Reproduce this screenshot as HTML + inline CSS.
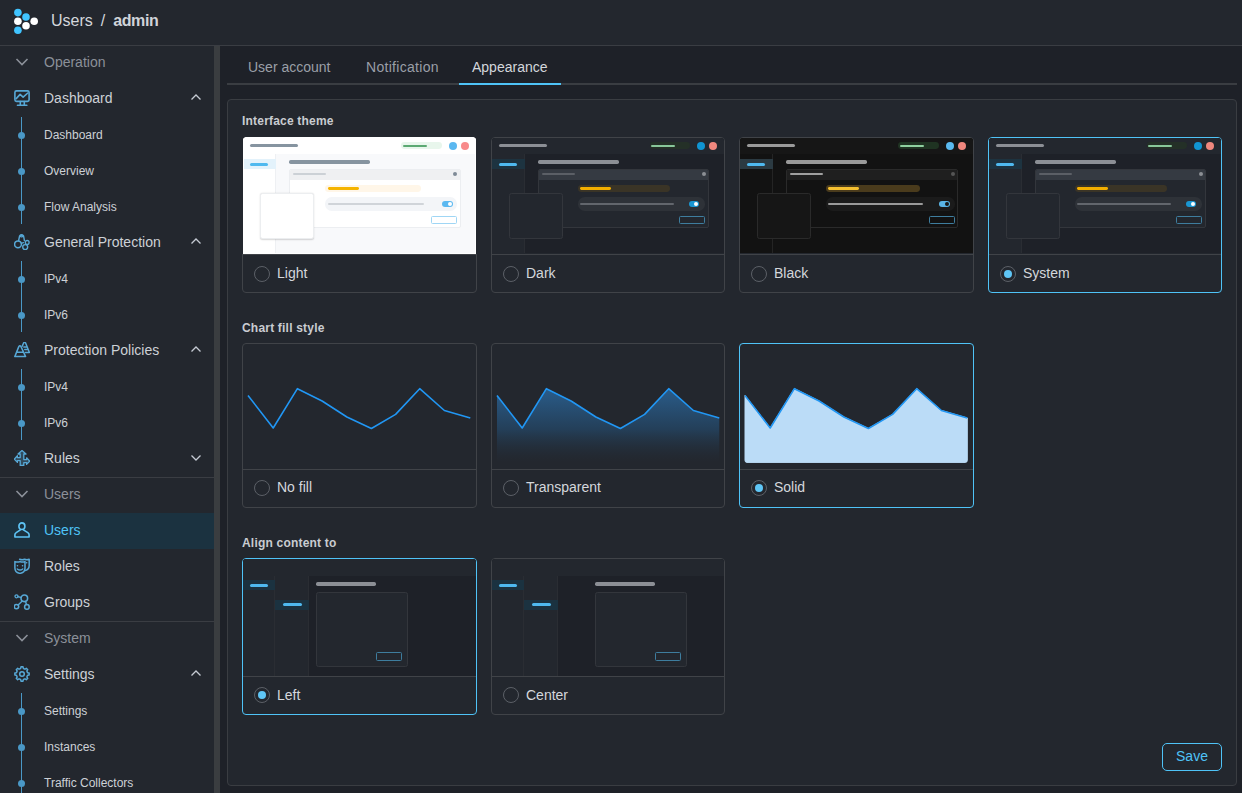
<!DOCTYPE html>
<html><head><meta charset="utf-8"><title>Appearance</title>
<style>
*{box-sizing:border-box;margin:0;padding:0}
html,body{width:1242px;height:793px;overflow:hidden;background:#1e2128;font-family:"Liberation Sans",sans-serif;color:#d4d7dc;position:relative}
.a{position:absolute}
.row{position:absolute;left:0;width:214px;height:36px;line-height:36px;font-size:14px;white-space:nowrap;color:#cdd1d6}
.row .t{position:absolute;left:44px;top:-1px}
.row.sub .t{top:0}
.sec{color:#8b9099}
.bt{border-top:1px solid #3a3d43}
.sub{font-size:12px}
.row svg{position:absolute}
.tab{position:absolute;top:52px;font-size:14px;line-height:30px;color:#9a9fa7;white-space:nowrap}
.lbl{position:absolute;font-size:12px;font-weight:bold;color:#c9ccd1;white-space:nowrap;line-height:16px;letter-spacing:0.2px}
.card{position:absolute;width:235px;border:1px solid #404348;border-radius:4px;background:#23272e;overflow:hidden}
.card.sel{border-color:#4fc3f7}
.sep{position:absolute;left:0;right:0;height:1px;background:#404348}
.radio{position:absolute;width:16px;height:16px;border-radius:50%;border:1px solid #5c6067}
.radio.on::after{content:"";position:absolute;left:3px;top:3px;width:8px;height:8px;border-radius:50%;background:#5fc6f6}
.ctext{position:absolute;font-size:14px;color:#d4d7dc;white-space:nowrap;line-height:16px}
.pv{position:absolute;left:-1px;top:-1px;width:235px;overflow:hidden}
.r{position:absolute}
</style></head>
<body>

<div class="a" style="left:0;top:0;width:1242px;height:45px;background:#23272e"></div>
<div class="a" style="left:0;top:45px;width:1242px;height:1px;background:#3a3d43"></div>
<svg class="a" style="left:0;top:0" width="46" height="45">
<circle cx="17.9" cy="12.6" r="3.8" fill="#40c4ff"/><circle cx="26" cy="17" r="3.8" fill="#40c4ff"/>
<circle cx="17.9" cy="21.3" r="3.8" fill="#fff"/><circle cx="34.2" cy="21.3" r="3.8" fill="#fff"/>
<circle cx="26" cy="25.8" r="3.8" fill="#fff"/><circle cx="17.9" cy="30.2" r="3.8" fill="#40c4ff"/></svg>
<div class="a" style="left:51px;top:9px;font-size:16px;line-height:24px;color:#d4d7dc;white-space:nowrap">Users<span style="margin:0 8px 0 8px">/</span><span style="font-weight:bold;letter-spacing:-0.4px;color:#d0d4da">admin</span></div>
<div class="a" style="left:0;top:46px;width:214px;height:747px;background:#23272e"></div>
<div class="a" style="left:214px;top:46px;width:6px;height:747px;background:#3a3d40"></div>
<div class="row sec" style="top:45px"><svg style="left:15px;top:12px" width="14" height="10"><path d="M1.5 2 L7 7.5 L12.5 2" fill="none" stroke="#8b9099" stroke-width="1.6"/></svg><span class="t" style="top:-1px">Operation</span></div>
<div class="row" style="top:81px"><svg style="left:14px;top:9px" width="16" height="16" viewBox="0 0 16 16" fill="none" stroke="#57a8d6" stroke-width="1.6" stroke-linecap="round" stroke-linejoin="round"><rect x="0.9" y="0.9" width="14.2" height="10.5" rx="1.6"/><path d="M2.2 8.6 L6.1 4.4 L9.1 7.2 L13.8 3"/><path d="M6.3 11.6 V15 M10.3 11.6 V15 M3.5 15.3 H12.8"/></svg><span class="t">Dashboard</span><svg style="left:190px;top:12px" width="12" height="8"><path d="M1.5 6.5 L6 2 L10.5 6.5" fill="none" stroke="#c5cad3" stroke-width="1.3"/></svg></div>
<div class="row sub" style="top:117px">
<div class="r" style="left:20.6px;top:0;width:1.5px;height:36px;background:#4a98c6"></div>
<div class="r" style="left:17.9px;top:14.7px;width:7px;height:7px;border-radius:50%;background:#4a98c6"></div>
<span class="t">Dashboard</span></div>
<div class="row sub" style="top:153px">
<div class="r" style="left:20.6px;top:0;width:1.5px;height:36px;background:#4a98c6"></div>
<div class="r" style="left:17.9px;top:14.7px;width:7px;height:7px;border-radius:50%;background:#4a98c6"></div>
<span class="t">Overview</span></div>
<div class="row sub" style="top:189px">
<div class="r" style="left:20.6px;top:0;width:1.5px;height:35px;background:#4a98c6"></div>
<div class="r" style="left:17.9px;top:14.7px;width:7px;height:7px;border-radius:50%;background:#4a98c6"></div>
<span class="t">Flow Analysis</span></div>
<div class="row" style="top:225px"><svg style="left:14px;top:9px" width="16" height="16" viewBox="0 0 16 16" fill="none" stroke="#57a8d6" stroke-width="1.6" stroke-linecap="round" stroke-linejoin="round"><path d="M4.6 6.6 L5.6 2 Q7.5 -0.4 9.6 2 L10.4 6.6" stroke-width="1.4"/><ellipse cx="7.6" cy="2.2" rx="1.2" ry="0.7" stroke-width="1.2"/><circle cx="4" cy="10.3" r="3.4" stroke-width="1.5"/><circle cx="13.2" cy="8.4" r="1.9" stroke-width="1.3"/><circle cx="11.2" cy="13.1" r="2.5" stroke-width="1.4"/><path d="M7.4 9.4 L9.4 8.6" stroke-width="1.3"/></svg><span class="t">General Protection</span><svg style="left:190px;top:12px" width="12" height="8"><path d="M1.5 6.5 L6 2 L10.5 6.5" fill="none" stroke="#c5cad3" stroke-width="1.3"/></svg></div>
<div class="row sub" style="top:261px">
<div class="r" style="left:20.6px;top:0;width:1.5px;height:36px;background:#4a98c6"></div>
<div class="r" style="left:17.9px;top:14.7px;width:7px;height:7px;border-radius:50%;background:#4a98c6"></div>
<span class="t">IPv4</span></div>
<div class="row sub" style="top:297px">
<div class="r" style="left:20.6px;top:0;width:1.5px;height:35px;background:#4a98c6"></div>
<div class="r" style="left:17.9px;top:14.7px;width:7px;height:7px;border-radius:50%;background:#4a98c6"></div>
<span class="t">IPv6</span></div>
<div class="row" style="top:333px"><svg style="left:14px;top:9px" width="16" height="16" viewBox="0 0 16 16" fill="none" stroke="#57a8d6" stroke-width="1.6" stroke-linecap="round" stroke-linejoin="round"><path d="M0.8 14.6 H11.6 L7 4.6 Q5.9 2.8 4.8 4.6 Z M2.6 10.2 H9.4" stroke-width="1.5"/><path d="M8.2 4.3 L9.6 1 Q10.6 -0.6 11.6 1 L15.4 10.4 H11.4 M9.8 5 H13 M10.8 7.6 H14.2" stroke-width="1.5"/></svg><span class="t">Protection Policies</span><svg style="left:190px;top:12px" width="12" height="8"><path d="M1.5 6.5 L6 2 L10.5 6.5" fill="none" stroke="#c5cad3" stroke-width="1.3"/></svg></div>
<div class="row sub" style="top:369px">
<div class="r" style="left:20.6px;top:0;width:1.5px;height:36px;background:#4a98c6"></div>
<div class="r" style="left:17.9px;top:14.7px;width:7px;height:7px;border-radius:50%;background:#4a98c6"></div>
<span class="t">IPv4</span></div>
<div class="row sub" style="top:405px">
<div class="r" style="left:20.6px;top:0;width:1.5px;height:35px;background:#4a98c6"></div>
<div class="r" style="left:17.9px;top:14.7px;width:7px;height:7px;border-radius:50%;background:#4a98c6"></div>
<span class="t">IPv6</span></div>
<div class="row" style="top:441px"><svg style="left:14px;top:9px" width="16" height="16" viewBox="0 0 16 16" fill="none" stroke="#57a8d6" stroke-width="1.6" stroke-linecap="round" stroke-linejoin="round"><path d="M8 0.6 L12 4 H9.8 V9.6 H12.6 V7.8 L15.6 11.1 L12.6 14.4 V12.6 H9.8 V15.4 H6.2 V10.6 H3.4 V12.4 L0.4 9.1 L3.4 5.8 V7.6 H6.2 V4 H4 Z" stroke-width="1.3" fill="rgba(87,168,214,0.28)"/></svg><span class="t">Rules</span><svg style="left:190px;top:13px" width="12" height="8"><path d="M1.5 1.5 L6 6 L10.5 1.5" fill="none" stroke="#c5cad3" stroke-width="1.3"/></svg></div>
<div class="row sec bt" style="top:477px"><svg style="left:15px;top:11px" width="14" height="10"><path d="M1.5 2 L7 7.5 L12.5 2" fill="none" stroke="#8b9099" stroke-width="1.6"/></svg><span class="t" style="top:-2px">Users</span></div>
<div class="row" style="top:513px;background:#1b3240;color:#4fc3f7"><svg style="left:14px;top:9px" width="16" height="16" viewBox="0 0 16 16" fill="none" stroke="#5ec4f5" stroke-width="1.6" stroke-linecap="round" stroke-linejoin="round"><ellipse cx="7.9" cy="4.2" rx="3" ry="3.3"/><path d="M6.4 7.8 L2.2 10.6 Q0.9 11.4 0.9 12.8 V15 H15.1 V12.8 Q15.1 11.4 13.8 10.6 L9.4 7.8"/></svg><span class="t">Users</span></div>
<div class="row" style="top:549px"><svg style="left:14px;top:9px" width="16" height="16" viewBox="0 0 16 16" fill="none" stroke="#57a8d6" stroke-width="1.6" stroke-linecap="round" stroke-linejoin="round"><path d="M0.9 3.6 Q3.5 4.6 6 3.6 Q8.6 4.6 11 3.6 V10 Q11 14.6 6 15.4 Q0.9 14.6 0.9 10 Z" stroke-width="1.5"/><path d="M5.6 1.2 Q8.2 2.2 10.6 1.2 Q13 2.2 15.2 1.2 V7.4 Q15.2 11.4 11.2 12.6" stroke-width="1.5"/><path d="M3.3 11 Q6 13.2 8.7 11 M3.4 7.8 h.1 M8.5 7.8 h.1 M12.6 4.8 h.1" stroke-width="1.5"/></svg><span class="t">Roles</span></div>
<div class="row" style="top:585px"><svg style="left:14px;top:9px" width="16" height="16" viewBox="0 0 16 16" fill="none" stroke="#57a8d6" stroke-width="1.6" stroke-linecap="round" stroke-linejoin="round"><circle cx="2.5" cy="2.3" r="1.5" stroke-width="1.3"/><circle cx="10.3" cy="4.3" r="3.3"/><circle cx="2.5" cy="12.6" r="2.2" stroke-width="1.5"/><circle cx="12.9" cy="12.9" r="2.3" stroke-width="1.5"/><path d="M4 2.8 L7 3.4 M4.1 11 L8 7.2 M11.6 7.5 L12.4 10.5" stroke-width="1.4"/></svg><span class="t">Groups</span></div>
<div class="row sec bt" style="top:621px"><svg style="left:15px;top:11px" width="14" height="10"><path d="M1.5 2 L7 7.5 L12.5 2" fill="none" stroke="#8b9099" stroke-width="1.6"/></svg><span class="t" style="top:-2px">System</span></div>
<div class="row" style="top:657px"><svg style="left:14px;top:9px" width="16" height="16" viewBox="0 0 16 16" fill="none" stroke="#57a8d6" stroke-width="1.6" stroke-linecap="round" stroke-linejoin="round"><path d="M5.90 2.92 L6.77 2.23 L7.00 0.87 L9.00 0.87 L9.23 2.23 L10.10 2.92 L11.21 3.05 L12.33 2.25 L13.75 3.67 L12.95 4.79 L13.08 5.90 L13.77 6.77 L15.13 7.00 L15.13 9.00 L13.77 9.23 L13.08 10.10 L12.95 11.21 L13.75 12.33 L12.33 13.75 L11.21 12.95 L10.10 13.08 L9.23 13.77 L9.00 15.13 L7.00 15.13 L6.77 13.77 L5.90 13.08 L4.79 12.95 L3.67 13.75 L2.25 12.33 L3.05 11.21 L2.92 10.10 L2.23 9.23 L0.87 9.00 L0.87 7.00 L2.23 6.77 L2.92 5.90 L3.05 4.79 L2.25 3.67 L3.67 2.25 L4.79 3.05 Z" stroke-width="1.5"/><circle cx="8" cy="8" r="2.3" stroke-width="1.5"/></svg><span class="t">Settings</span><svg style="left:190px;top:12px" width="12" height="8"><path d="M1.5 6.5 L6 2 L10.5 6.5" fill="none" stroke="#c5cad3" stroke-width="1.3"/></svg></div>
<div class="row sub" style="top:693px">
<div class="r" style="left:20.6px;top:0;width:1.5px;height:36px;background:#4a98c6"></div>
<div class="r" style="left:17.9px;top:14.7px;width:7px;height:7px;border-radius:50%;background:#4a98c6"></div>
<span class="t">Settings</span></div>
<div class="row sub" style="top:729px">
<div class="r" style="left:20.6px;top:0;width:1.5px;height:36px;background:#4a98c6"></div>
<div class="r" style="left:17.9px;top:14.7px;width:7px;height:7px;border-radius:50%;background:#4a98c6"></div>
<span class="t">Instances</span></div>
<div class="row sub" style="top:765px">
<div class="r" style="left:20.6px;top:0;width:1.5px;height:36px;background:#4a98c6"></div>
<div class="r" style="left:17.9px;top:14.7px;width:7px;height:7px;border-radius:50%;background:#4a98c6"></div>
<span class="t">Traffic Collectors</span></div>
<div class="tab" style="left:248px">User account</div>
<div class="tab" style="left:366px;letter-spacing:0.3px">Notification</div>
<div class="tab" style="left:472px;color:#d4d7dc">Appearance</div>
<div class="a" style="left:227px;top:83px;width:1010px;height:2px;background:#3a3d42"></div>
<div class="a" style="left:459px;top:83px;width:102px;height:2px;background:#4fc3f7"></div>
<div class="a" style="left:227px;top:99px;width:1010px;height:687px;background:#23272e;border:1px solid #3a3d42;border-radius:4px"></div>
<div class="lbl" style="left:242px;top:113px">Interface theme</div>
<div class="lbl" style="left:242px;top:320px">Chart fill style</div>
<div class="lbl" style="left:242px;top:535px">Align content to</div>
<div class="card" style="left:242px;top:137px;height:156px;width:235px">
<div class="pv" style="height:116px"><div class="r" style="left:0px;top:0px;width:235px;height:117px;background:#f8f9fb;"></div><div class="r" style="left:0px;top:0px;width:235px;height:17px;background:#ffffff;"></div><div class="r" style="left:0px;top:17px;width:34px;height:100px;background:#ffffff;border-right:1px solid #eef0f3"></div><div class="r" style="left:7.9px;top:6.999999999999999px;width:48.0px;height:3.4px;border-radius:1.7px;background:#8694a0"></div><div class="r" style="left:158.6px;top:5.199999999999999px;width:41.400000000000006px;height:6.8px;border-radius:3.4px;background:#e8f6ec"></div><div class="r" style="left:160.9px;top:7.5px;width:24.19999999999999px;height:2.2px;border-radius:1.1px;background:#5ca973"></div><div class="r" style="left:206.90px;top:4.60px;width:8px;height:8px;border-radius:50%;background:#5bb8f0"></div><div class="r" style="left:219.00px;top:4.60px;width:8px;height:8px;border-radius:50%;background:#f88a8a"></div><div class="r" style="left:0px;top:22px;width:33.5px;height:9.5px;background:#e3f2fb;"></div><div class="r" style="left:7.8px;top:25.5px;width:18.4px;height:3px;border-radius:1.5px;background:#4fb9ef"></div><div class="r" style="left:47.1px;top:23.3px;width:81.4px;height:3.4px;border-radius:1.7px;background:#8694a0"></div><div class="r" style="left:46.6px;top:32.3px;width:172.90px;height:58.7px;background:#ffffff;border:1px solid #eceef1;border-radius:2px;overflow:hidden"><div class="r" style="left:-1px;top:-1px;width:172.90px;height:10.5px;background:#eff0f2"></div></div><div class="r" style="left:51.2px;top:35.8px;width:32.5px;height:2px;border-radius:1.0px;background:#ccd1d6"></div><div class="r" style="left:211.10px;top:34.80px;width:4px;height:4px;border-radius:50%;background:#7e8a96"></div><div class="r" style="left:83px;top:48.1px;width:96.1px;height:6.8px;border-radius:3.4px;background:#fff6e8"></div><div class="r" style="left:86px;top:50.1px;width:31.299999999999997px;height:2.8px;border-radius:1.4px;background:#f5b400"></div><div class="r" style="left:83px;top:60.3px;width:131.6px;height:13.6px;border-radius:6.8px;background:#f3f5f8"></div><div class="r" style="left:86px;top:65.9px;width:96.4px;height:2.2px;border-radius:1.1px;background:#d0d4d9"></div><div class="r" style="left:200px;top:63.95px;width:10.900000000000006px;height:6.1px;border-radius:3.05px;background:#5bb8f0"></div><div class="r" style="left:205.65px;top:64.80px;width:4.4px;height:4.4px;border-radius:50%;background:#ffffff"></div><div class="r" style="left:189.2px;top:79.2px;width:26.20px;height:8.3px;border:1px solid #9fd6f5;border-radius:1.5px"></div><div class="r" style="left:18.2px;top:56.2px;width:53.4px;height:46.3px;background:#ffffff;border:1px solid #eceef0;border-radius:2.5px;box-shadow:0 0.5px 1.5px rgba(0,0,0,0.16);"></div></div>
<div class="sep" style="top:116px"></div>
<div class="radio" style="left:10.5px;top:128px"></div>
<div class="ctext" style="left:34px;top:127px">Light</div>
</div>
<div class="card" style="left:491px;top:137px;height:156px;width:234px">
<div class="pv" style="height:116px"><div class="r" style="left:0px;top:0px;width:235px;height:117px;background:#1e2128;"></div><div class="r" style="left:0px;top:0px;width:235px;height:17px;background:#23272e;"></div><div class="r" style="left:0px;top:17px;width:34px;height:100px;background:#23272e;border-right:1px solid #2a2d33"></div><div class="r" style="left:7.9px;top:6.999999999999999px;width:48.0px;height:3.4px;border-radius:1.7px;background:#8c8f95"></div><div class="r" style="left:158.6px;top:5.199999999999999px;width:40.099999999999994px;height:6.8px;border-radius:3.4px;background:#243027"></div><div class="r" style="left:160.2px;top:7.5px;width:24.200000000000017px;height:2.2px;border-radius:1.1px;background:#88c79a"></div><div class="r" style="left:206.10px;top:4.60px;width:8px;height:8px;border-radius:50%;background:#1094d2"></div><div class="r" style="left:217.90px;top:4.60px;width:8px;height:8px;border-radius:50%;background:#f0877e"></div><div class="r" style="left:0px;top:22px;width:33.5px;height:9.5px;background:#1d3340;"></div><div class="r" style="left:7.8px;top:25.5px;width:18.4px;height:3px;border-radius:1.5px;background:#4fb9ef"></div><div class="r" style="left:47.1px;top:23.3px;width:81.4px;height:3.4px;border-radius:1.7px;background:#8c8f95"></div><div class="r" style="left:46.6px;top:32.3px;width:171.80px;height:58.7px;background:#23272e;border:1px solid #33363c;border-radius:2px;overflow:hidden"><div class="r" style="left:-1px;top:-1px;width:171.80px;height:10.5px;background:#353a42"></div></div><div class="r" style="left:51.2px;top:35.8px;width:32.5px;height:2px;border-radius:1.0px;background:#5b5f66"></div><div class="r" style="left:210.50px;top:34.80px;width:4px;height:4px;border-radius:50%;background:#8c8f95"></div><div class="r" style="left:86.8px;top:48.1px;width:92.60000000000001px;height:6.8px;border-radius:3.4px;background:#3a3426"></div><div class="r" style="left:89.3px;top:50.1px;width:30.5px;height:2.8px;border-radius:1.4px;background:#f2ae00"></div><div class="r" style="left:86.5px;top:60.3px;width:127.4px;height:13.6px;border-radius:6.8px;background:#2e3238"></div><div class="r" style="left:89.3px;top:65.9px;width:93.60000000000001px;height:2.2px;border-radius:1.1px;background:#62666c"></div><div class="r" style="left:198px;top:63.95px;width:10.099999999999994px;height:6.1px;border-radius:3.05px;background:#1a96d2"></div><div class="r" style="left:202.85px;top:64.80px;width:4.4px;height:4.4px;border-radius:50%;background:#ffffff"></div><div class="r" style="left:188.2px;top:79.2px;width:25.70px;height:8.3px;border:1px solid #3e7d9e;border-radius:1.5px"></div><div class="r" style="left:18.2px;top:56.2px;width:53.4px;height:46.3px;background:#23272e;border:1px solid #33363c;border-radius:2.5px;"></div></div>
<div class="sep" style="top:116px"></div>
<div class="radio" style="left:10.5px;top:128px"></div>
<div class="ctext" style="left:34px;top:127px">Dark</div>
</div>
<div class="card" style="left:739px;top:137px;height:156px;width:235px">
<div class="pv" style="height:116px"><div class="r" style="left:0px;top:0px;width:235px;height:117px;background:#121212;"></div><div class="r" style="left:0px;top:0px;width:235px;height:17px;background:#161616;"></div><div class="r" style="left:0px;top:17px;width:34px;height:100px;background:#121212;border-right:1px solid #242424"></div><div class="r" style="left:7.9px;top:6.999999999999999px;width:48.0px;height:3.4px;border-radius:1.7px;background:#9a9a9a"></div><div class="r" style="left:158.6px;top:5.199999999999999px;width:41.400000000000006px;height:6.8px;border-radius:3.4px;background:#1f3322"></div><div class="r" style="left:160.9px;top:7.5px;width:24.19999999999999px;height:2.2px;border-radius:1.1px;background:#8fd09f"></div><div class="r" style="left:207.20px;top:4.60px;width:8px;height:8px;border-radius:50%;background:#5ab9ef"></div><div class="r" style="left:219.00px;top:4.60px;width:8px;height:8px;border-radius:50%;background:#f0877e"></div><div class="r" style="left:0px;top:22px;width:33.5px;height:9.5px;background:#2b3a42;"></div><div class="r" style="left:7.8px;top:25.5px;width:18.4px;height:3px;border-radius:1.5px;background:#4fb9ef"></div><div class="r" style="left:47.1px;top:23.3px;width:81.4px;height:3.4px;border-radius:1.7px;background:#9a9a9a"></div><div class="r" style="left:46.6px;top:32.3px;width:172.90px;height:58.7px;background:#121212;border:1px solid #2a2a2a;border-radius:2px;overflow:hidden"><div class="r" style="left:-1px;top:-1px;width:172.90px;height:10.5px;background:#1f1f1f"></div></div><div class="r" style="left:51.2px;top:35.8px;width:32.5px;height:2px;border-radius:1.0px;background:#a0a0a0"></div><div class="r" style="left:211.60px;top:34.80px;width:4px;height:4px;border-radius:50%;background:#555555"></div><div class="r" style="left:86.8px;top:48.1px;width:93.8px;height:6.8px;border-radius:3.4px;background:#4a3b1c"></div><div class="r" style="left:89.3px;top:50.1px;width:31.10000000000001px;height:2.8px;border-radius:1.4px;background:#f5c030"></div><div class="r" style="left:86.8px;top:60.3px;width:128.89999999999998px;height:13.6px;border-radius:6.8px;background:#1b1b1b"></div><div class="r" style="left:89.3px;top:65.9px;width:94.3px;height:2.2px;border-radius:1.1px;background:#9a9a9a"></div><div class="r" style="left:200.3px;top:63.95px;width:10.599999999999994px;height:6.1px;border-radius:3.05px;background:#5ab4e6"></div><div class="r" style="left:205.65px;top:64.80px;width:4.4px;height:4.4px;border-radius:50%;background:#161616"></div><div class="r" style="left:190.1px;top:79.2px;width:25.70px;height:8.3px;border:1px solid #3e7d9e;border-radius:1.5px"></div><div class="r" style="left:18.2px;top:56.2px;width:53.4px;height:46.3px;background:#161616;border:1px solid #2a2a2a;border-radius:2.5px;"></div></div>
<div class="sep" style="top:116px"></div>
<div class="radio" style="left:10.5px;top:128px"></div>
<div class="ctext" style="left:34px;top:127px">Black</div>
</div>
<div class="card sel" style="left:988px;top:137px;height:156px;width:234px">
<div class="pv" style="height:116px"><div class="r" style="left:0px;top:0px;width:235px;height:117px;background:#1e2128;"></div><div class="r" style="left:0px;top:0px;width:235px;height:17px;background:#23272e;"></div><div class="r" style="left:0px;top:17px;width:34px;height:100px;background:#23272e;border-right:1px solid #2a2d33"></div><div class="r" style="left:7.9px;top:6.999999999999999px;width:48.0px;height:3.4px;border-radius:1.7px;background:#8c8f95"></div><div class="r" style="left:158.6px;top:5.199999999999999px;width:40.099999999999994px;height:6.8px;border-radius:3.4px;background:#243027"></div><div class="r" style="left:160.2px;top:7.5px;width:24.200000000000017px;height:2.2px;border-radius:1.1px;background:#88c79a"></div><div class="r" style="left:206.10px;top:4.60px;width:8px;height:8px;border-radius:50%;background:#1094d2"></div><div class="r" style="left:217.90px;top:4.60px;width:8px;height:8px;border-radius:50%;background:#f0877e"></div><div class="r" style="left:0px;top:22px;width:33.5px;height:9.5px;background:#1d3340;"></div><div class="r" style="left:7.8px;top:25.5px;width:18.4px;height:3px;border-radius:1.5px;background:#4fb9ef"></div><div class="r" style="left:47.1px;top:23.3px;width:81.4px;height:3.4px;border-radius:1.7px;background:#8c8f95"></div><div class="r" style="left:46.6px;top:32.3px;width:171.80px;height:58.7px;background:#23272e;border:1px solid #33363c;border-radius:2px;overflow:hidden"><div class="r" style="left:-1px;top:-1px;width:171.80px;height:10.5px;background:#353a42"></div></div><div class="r" style="left:51.2px;top:35.8px;width:32.5px;height:2px;border-radius:1.0px;background:#5b5f66"></div><div class="r" style="left:210.50px;top:34.80px;width:4px;height:4px;border-radius:50%;background:#8c8f95"></div><div class="r" style="left:86.8px;top:48.1px;width:92.60000000000001px;height:6.8px;border-radius:3.4px;background:#3a3426"></div><div class="r" style="left:89.3px;top:50.1px;width:30.5px;height:2.8px;border-radius:1.4px;background:#f2ae00"></div><div class="r" style="left:86.5px;top:60.3px;width:127.4px;height:13.6px;border-radius:6.8px;background:#2e3238"></div><div class="r" style="left:89.3px;top:65.9px;width:93.60000000000001px;height:2.2px;border-radius:1.1px;background:#62666c"></div><div class="r" style="left:198px;top:63.95px;width:10.099999999999994px;height:6.1px;border-radius:3.05px;background:#1a96d2"></div><div class="r" style="left:202.85px;top:64.80px;width:4.4px;height:4.4px;border-radius:50%;background:#ffffff"></div><div class="r" style="left:188.2px;top:79.2px;width:25.70px;height:8.3px;border:1px solid #3e7d9e;border-radius:1.5px"></div><div class="r" style="left:18.2px;top:56.2px;width:53.4px;height:46.3px;background:#23272e;border:1px solid #33363c;border-radius:2.5px;"></div></div>
<div class="sep" style="top:116px"></div>
<div class="radio on" style="left:10.5px;top:128px"></div>
<div class="ctext" style="left:34px;top:127px">System</div>
</div>
<div class="a" style="left:242px;top:137px;width:235px;height:117px;background:#23272e"><div class="r" style="left:1px;top:0;width:233px;height:117px;border-radius:4px 4px 0 0;overflow:hidden"><div class="r" style="left:-1px;top:0;width:235px;height:117px"><div class="r" style="left:0px;top:0px;width:235px;height:117px;background:#f8f9fb;"></div><div class="r" style="left:0px;top:0px;width:235px;height:17px;background:#ffffff;"></div><div class="r" style="left:0px;top:17px;width:34px;height:100px;background:#ffffff;border-right:1px solid #eef0f3"></div><div class="r" style="left:7.9px;top:6.999999999999999px;width:48.0px;height:3.4px;border-radius:1.7px;background:#8694a0"></div><div class="r" style="left:158.6px;top:5.199999999999999px;width:41.400000000000006px;height:6.8px;border-radius:3.4px;background:#e8f6ec"></div><div class="r" style="left:160.9px;top:7.5px;width:24.19999999999999px;height:2.2px;border-radius:1.1px;background:#5ca973"></div><div class="r" style="left:206.90px;top:4.60px;width:8px;height:8px;border-radius:50%;background:#5bb8f0"></div><div class="r" style="left:219.00px;top:4.60px;width:8px;height:8px;border-radius:50%;background:#f88a8a"></div><div class="r" style="left:0px;top:22px;width:33.5px;height:9.5px;background:#e3f2fb;"></div><div class="r" style="left:7.8px;top:25.5px;width:18.4px;height:3px;border-radius:1.5px;background:#4fb9ef"></div><div class="r" style="left:47.1px;top:23.3px;width:81.4px;height:3.4px;border-radius:1.7px;background:#8694a0"></div><div class="r" style="left:46.6px;top:32.3px;width:172.90px;height:58.7px;background:#ffffff;border:1px solid #eceef1;border-radius:2px;overflow:hidden"><div class="r" style="left:-1px;top:-1px;width:172.90px;height:10.5px;background:#eff0f2"></div></div><div class="r" style="left:51.2px;top:35.8px;width:32.5px;height:2px;border-radius:1.0px;background:#ccd1d6"></div><div class="r" style="left:211.10px;top:34.80px;width:4px;height:4px;border-radius:50%;background:#7e8a96"></div><div class="r" style="left:83px;top:48.1px;width:96.1px;height:6.8px;border-radius:3.4px;background:#fff6e8"></div><div class="r" style="left:86px;top:50.1px;width:31.299999999999997px;height:2.8px;border-radius:1.4px;background:#f5b400"></div><div class="r" style="left:83px;top:60.3px;width:131.6px;height:13.6px;border-radius:6.8px;background:#f3f5f8"></div><div class="r" style="left:86px;top:65.9px;width:96.4px;height:2.2px;border-radius:1.1px;background:#d0d4d9"></div><div class="r" style="left:200px;top:63.95px;width:10.900000000000006px;height:6.1px;border-radius:3.05px;background:#5bb8f0"></div><div class="r" style="left:205.65px;top:64.80px;width:4.4px;height:4.4px;border-radius:50%;background:#ffffff"></div><div class="r" style="left:189.2px;top:79.2px;width:26.20px;height:8.3px;border:1px solid #9fd6f5;border-radius:1.5px"></div><div class="r" style="left:18.2px;top:56.2px;width:53.4px;height:46.3px;background:#ffffff;border:1px solid #eceef0;border-radius:2.5px;box-shadow:0 0.5px 1.5px rgba(0,0,0,0.16);"></div></div><div class="r" style="left:0;top:0;width:233px;height:117px;border:1px solid #fff;border-top:none"></div></div></div>
<div class="card" style="left:242px;top:343px;height:165px;width:235px">
<svg class="r" style="left:-1px;top:-1px" width="235" height="130" viewBox="0 0 235 130"><defs><linearGradient id="g1" x1="0" y1="0" x2="0" y2="1"><stop offset="0" stop-color="#2a5f8f" stop-opacity="0.95"/><stop offset="0.55" stop-color="#24425e" stop-opacity="0.9"/><stop offset="1" stop-color="#23272e" stop-opacity="0.3"/></linearGradient></defs><polyline points="6.0,52.5 31.2,85.0 55.4,45.7 80.1,58.0 104.9,74.0 129.4,85.5 153.6,71.4 177.7,45.7 202.4,67.5 228.3,75.0" fill="none" stroke="#2196f3" stroke-width="1.6" stroke-linejoin="round"/></svg>
<div class="sep" style="top:125px"></div>
<div class="radio" style="left:10.5px;top:135.8px"></div>
<div class="ctext" style="left:34px;top:135px">No fill</div>
</div>
<div class="card" style="left:491px;top:343px;height:165px;width:234px">
<svg class="r" style="left:-1px;top:-1px" width="235" height="130" viewBox="0 0 235 130"><defs><linearGradient id="g1" x1="0" y1="0" x2="0" y2="1"><stop offset="0" stop-color="#2a5f8f" stop-opacity="0.95"/><stop offset="0.55" stop-color="#24425e" stop-opacity="0.9"/><stop offset="1" stop-color="#23272e" stop-opacity="0.3"/></linearGradient></defs><path d="M6,117.4 L6.0,52.5 L31.2,85.0 L55.4,45.7 L80.1,58.0 L104.9,74.0 L129.4,85.5 L153.6,71.4 L177.7,45.7 L202.4,67.5 L228.3,75.0 L228.3,117.4 Q228.3,119.4 226.3,119.4 L8,119.4 Q6,119.4 6,117.4 Z" fill="url(#g1)"/><polyline points="6.0,52.5 31.2,85.0 55.4,45.7 80.1,58.0 104.9,74.0 129.4,85.5 153.6,71.4 177.7,45.7 202.4,67.5 228.3,75.0" fill="none" stroke="#2196f3" stroke-width="1.6" stroke-linejoin="round"/></svg>
<div class="sep" style="top:125px"></div>
<div class="radio" style="left:10.5px;top:135.8px"></div>
<div class="ctext" style="left:34px;top:135px">Transparent</div>
</div>
<div class="card sel" style="left:739px;top:343px;height:165px;width:235px">
<svg class="r" style="left:-1px;top:-1px" width="235" height="130" viewBox="0 0 235 130"><defs><linearGradient id="g1" x1="0" y1="0" x2="0" y2="1"><stop offset="0" stop-color="#2a5f8f" stop-opacity="0.95"/><stop offset="0.55" stop-color="#24425e" stop-opacity="0.9"/><stop offset="1" stop-color="#23272e" stop-opacity="0.3"/></linearGradient></defs><path d="M6,117.4 L6.0,52.5 L31.2,85.0 L55.4,45.7 L80.1,58.0 L104.9,74.0 L129.4,85.5 L153.6,71.4 L177.7,45.7 L202.4,67.5 L228.3,75.0 L228.3,117.4 Q228.3,119.4 226.3,119.4 L8,119.4 Q6,119.4 6,117.4 Z" fill="#bbdcf7" stroke="#bbdcf7" stroke-width="1" stroke-linejoin="round"/><polyline points="6.0,52.5 31.2,85.0 55.4,45.7 80.1,58.0 104.9,74.0 129.4,85.5 153.6,71.4 177.7,45.7 202.4,67.5 228.3,75.0" fill="none" stroke="#2196f3" stroke-width="1.6" stroke-linejoin="round"/></svg>
<div class="sep" style="top:125px"></div>
<div class="radio on" style="left:10.5px;top:135.8px"></div>
<div class="ctext" style="left:34px;top:135px">Solid</div>
</div>
<div class="card sel" style="left:242px;top:558px;height:157px;width:235px">
<div class="pv" style="height:118px"><div class="r" style="left:0px;top:0px;width:235px;height:118px;background:#1e2128;"></div><div class="r" style="left:0px;top:0px;width:235px;height:18.3px;background:#23272e;"></div><div class="r" style="left:0px;top:18.3px;width:33px;height:99.7px;background:#23272e;border-right:1px solid #2a2d33"></div><div class="r" style="left:33px;top:18.3px;width:34px;height:99.7px;background:#23272e;border-right:1px solid #2a2d33"></div><div class="r" style="left:0px;top:22px;width:33px;height:10px;background:#1b3240;"></div><div class="r" style="left:7.6px;top:25.8px;width:18.6px;height:3px;border-radius:1.5px;background:#4fb9ef"></div><div class="r" style="left:33px;top:42px;width:34px;height:9.600000000000001px;background:#1b3240;"></div><div class="r" style="left:41.3px;top:45.3px;width:18.300000000000004px;height:3px;border-radius:1.5px;background:#4fb9ef"></div><div class="r" style="left:73.6px;top:24.2px;width:60.20000000000002px;height:3.4px;border-radius:1.7px;background:#8c8f95"></div><div class="r" style="left:73.6px;top:34.3px;width:92.5px;height:74.3px;background:#23272e;border:1px solid #33363c;border-radius:2.5px"></div><div class="r" style="left:134.2px;top:94.2px;width:26px;height:9.2px;border:1px solid #3e7d9e;border-radius:1.5px"></div></div>
<div class="sep" style="top:117px"></div>
<div class="radio on" style="left:10.5px;top:128px"></div>
<div class="ctext" style="left:34px;top:128px">Left</div>
</div>
<div class="card" style="left:491px;top:558px;height:157px;width:234px">
<div class="pv" style="height:118px"><div class="r" style="left:0px;top:0px;width:235px;height:118px;background:#1e2128;"></div><div class="r" style="left:0px;top:0px;width:235px;height:18.3px;background:#23272e;"></div><div class="r" style="left:0px;top:18.3px;width:33px;height:99.7px;background:#23272e;border-right:1px solid #2a2d33"></div><div class="r" style="left:33px;top:18.3px;width:34px;height:99.7px;background:#23272e;border-right:1px solid #2a2d33"></div><div class="r" style="left:0px;top:22px;width:33px;height:10px;background:#1b3240;"></div><div class="r" style="left:7.6px;top:25.8px;width:18.6px;height:3px;border-radius:1.5px;background:#4fb9ef"></div><div class="r" style="left:33px;top:42px;width:34px;height:9.600000000000001px;background:#1b3240;"></div><div class="r" style="left:41.3px;top:45.3px;width:18.300000000000004px;height:3px;border-radius:1.5px;background:#4fb9ef"></div><div class="r" style="left:103.5px;top:24.2px;width:60.19999999999999px;height:3.4px;border-radius:1.7px;background:#8c8f95"></div><div class="r" style="left:103.5px;top:34.3px;width:92.5px;height:74.3px;background:#23272e;border:1px solid #33363c;border-radius:2.5px"></div><div class="r" style="left:164.1px;top:94.2px;width:26px;height:9.2px;border:1px solid #3e7d9e;border-radius:1.5px"></div></div>
<div class="sep" style="top:117px"></div>
<div class="radio" style="left:10.5px;top:128px"></div>
<div class="ctext" style="left:34px;top:128px">Center</div>
</div>
<div class="a" style="left:1162px;top:743px;width:60px;height:28px;border:1.5px solid #4fc3f7;border-radius:5px;color:#4fc3f7;font-size:14px;line-height:25px;text-align:center">Save</div>

</body></html>
